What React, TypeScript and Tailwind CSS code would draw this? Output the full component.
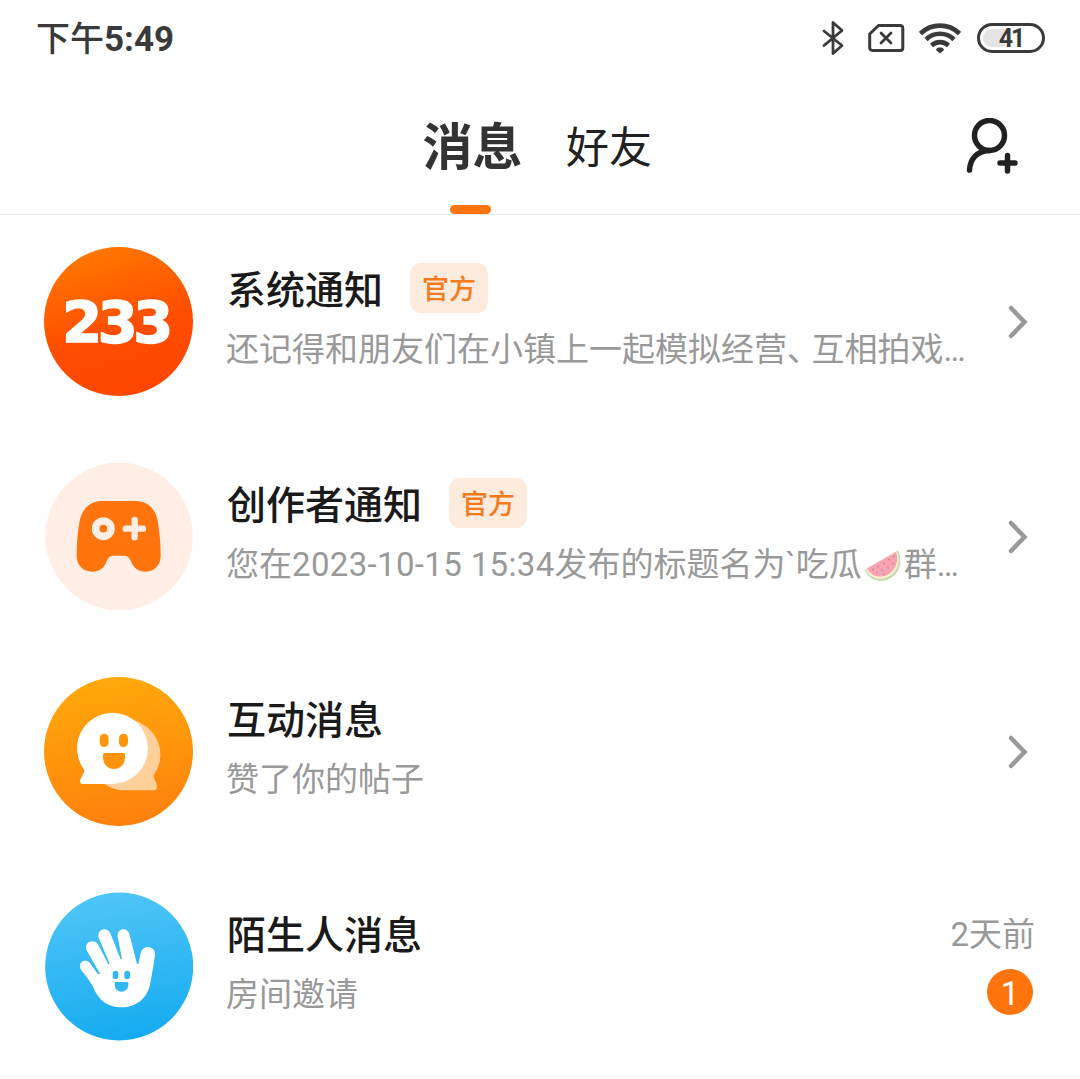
import React from 'react';

const AVATAR = 'w-[149px] h-[149px] shrink-0';

const LogoAvatar: React.FC = () => (
  <svg viewBox="42 36 447 447" className={AVATAR}>
    <defs>
      <linearGradient id="logo-bg" x1="0.25" y1="0" x2="0.55" y2="1">
        <stop offset="0" stopColor="#ff7a00" />
        <stop offset="0.6" stopColor="#ff4c00" />
        <stop offset="1" stopColor="#ff4700" />
      </linearGradient>
    </defs>
    <circle cx="265.5" cy="259.5" r="223.5" fill="url(#logo-bg)" />
    <text
      x="97 203 310"
      y="323"
      fill="#fff"
      stroke="#fff"
      strokeWidth="5"
      fontSize="172"
      className="font-['DejaVu_Sans'] font-bold"
    >
      233
    </text>
  </svg>
);

const GamepadAvatar: React.FC = () => (
  <svg viewBox="42 36 447 447" className={AVATAR}>
    <circle cx="267.5" cy="259.5" r="221.5" fill="#feeee6" />
    <path
      d="M215 153H318C355 153 377 180 383 212C389 245 392 280 392 318C392 346 372 365 347 365C325 365 311 354 304 336C299 323 293 317 280 317H252C239 317 234 323 229 336C222 354 208 365 186 365C160 365 140 346 140 318C140 280 143 245 149 212C156 180 178 153 215 153Z"
      fill="#ff740d"
    />
    <circle cx="220" cy="236" r="23" fill="none" stroke="#feeee6" strokeWidth="23" />
    <path d="M314 210V262M287 236H339" stroke="#feeee6" strokeWidth="19" strokeLinecap="round" />
  </svg>
);

const BubbleAvatar: React.FC = () => (
  <svg viewBox="42 36 447 447" className={AVATAR}>
    <defs>
      <linearGradient id="bubble-bg" x1="0.4" y1="0" x2="0.55" y2="1">
        <stop offset="0" stopColor="#ffa90b" />
        <stop offset="1" stopColor="#ff800c" />
      </linearGradient>
    </defs>
    <circle cx="265.5" cy="259.5" r="223.5" fill="url(#bubble-bg)" />
    <path
      d="M284 163A106 106 0 0 1 371 331C370 340 381 353 381 365C381 372 378 376 371 376H284A106 106 0 0 1 284 163Z"
      fill="#ffcf99"
    />
    <path
      d="M247 143A107 107 0 1 1 247 357H158C151 357 149 352 151 345C154 334 163 325 163 315A107 107 0 0 1 247 143Z"
      fill="#fff"
    />
    <rect x="209" y="206" width="27" height="40" rx="13.5" fill="#ff960c" />
    <rect x="267" y="206" width="27" height="40" rx="13.5" fill="#ff960c" />
    <path d="M224 264H280Q285 264 285 270V279A33 33 0 0 1 219 279V270Q219 264 224 264Z" fill="#ff930c" />
  </svg>
);

const HandAvatar: React.FC = () => (
  <svg viewBox="42 36 447 447" className={AVATAR}>
    <defs>
      <linearGradient id="hand-bg" x1="0.4" y1="0" x2="0.55" y2="1">
        <stop offset="0" stopColor="#50c5f7" />
        <stop offset="1" stopColor="#15abf0" />
      </linearGradient>
    </defs>
    <circle cx="267.5" cy="259.5" r="222" fill="url(#hand-bg)" />
    <path
      d="M150 259C149 244 166 237 178 247L204 283L210 281L170 211C160 190 187 174 203 191L235 253L239 251L206 173C199 149 231 138 241 160L272 238L276 237L263 170C260 145 291 140 298 162L321 252H325L333 216C342 192 377 199 375 224C371 254 366 281 361 309C353 357 316 382 274 382C233 382 207 360 193 329C185 309 170 290 155 272C152 268 150 264 150 259Z"
      fill="#fff"
    />
    <rect x="248" y="272" width="17" height="25" rx="8.5" fill="#32b7f3" />
    <rect x="283" y="272" width="17" height="25" rx="8.5" fill="#32b7f3" />
    <path d="M257 306H291Q295 306 295 310V315A20.500 20.500 0 0 1 254 315V310Q254 306 257 306Z" fill="#32b7f3" />
  </svg>
);

const Watermelon: React.FC = () => (
  <svg viewBox="0 0 38 32" className="inline-block w-[38px] h-8 mx-[2px] align-[-6px]">
    <path d="M0.500 20L34 0.500C39 11 36 23 26 28.500C16 34 5 29.500 0.500 20Z" fill="#c3dcae" />
    <path d="M1.500 19.500L33 1C37 11 34 21.500 25 26.500C16 31.500 6 28 1.500 19.500Z" fill="#fbeed2" />
    <path d="M3 18.500L32 2C35 10 32 20 24 24.500C16 29 7 26 3 18.500Z" fill="#f7a3b1" />
    <path
      d="M9 19v1M14 16v1M20 13v1M25 9v1M30 6v1M13 22v1M18 20v1M24 17v1M29 13v1M20 24v1"
      stroke="#c98897"
      strokeWidth="1.400"
      strokeLinecap="round"
    />
  </svg>
);

const Chevron: React.FC = () => (
  <svg viewBox="0 0 20 34" className="w-5 h-[34px] mt-[90px] mr-[52px] shrink-0" fill="none">
    <path d="M3 3L16.500 17L3 31" stroke="#999" strokeWidth="4.500" strokeLinecap="round" strokeLinejoin="miter" />
  </svg>
);

const StatusBar: React.FC = () => (
  <div className="flex h-[76px] items-center pl-9 pr-[35px] text-[#3a3a3a]">
    <span className="pt-[2px] text-[34px] leading-[40px] font-medium">
      下午<span className="text-[35px] font-bold">5:49</span>
    </span>
    <div className="ml-auto flex items-center">
      <svg viewBox="0 0 24 36" className="w-6 h-9" fill="none">
        <path
          d="M3 11L21 25.500L12 33.500V2.500L21 10.500L3 25.500"
          stroke="currentColor"
          strokeWidth="2.800"
          strokeLinecap="round"
          strokeLinejoin="round"
        />
      </svg>
      <svg
        viewBox="0 0 37 30"
        className="ml-[23px] w-[37px] h-[30px]"
        fill="none"
        stroke="currentColor"
        strokeLinecap="round"
        strokeLinejoin="round"
      >
        <path
          d="M10.500 2.500H32Q34.800 2.500 34.800 5.300V24.700Q34.800 27.500 32 27.500H4.500Q1.700 27.500 1.700 24.700V11Z"
          strokeWidth="3"
        />
        <path d="M13 10L23 20M23 10L13 20" strokeWidth="2.800" />
      </svg>
      <svg viewBox="0 0 42 32" className="ml-[14px] w-[42px] h-8" fill="none" stroke="currentColor" strokeWidth="4.600">
        <path d="M1.500 11.500A28 28 0 0 1 40.500 11.500" />
        <path d="M7 17.500A20 20 0 0 1 35 17.500" />
        <path d="M12.500 23.500A12.500 12.500 0 0 1 29.500 23.500" />
        <path
          d="M21 25.500C24 25.500 25.500 27 24.500 28.500L21 31.500L17.500 28.500C16.500 27 18 25.500 21 25.500Z"
          fill="currentColor"
          stroke="none"
        />
      </svg>
      <div className="ml-4 flex h-[30px] w-[68px] items-center justify-center rounded-full border-[3px] border-[#3a3a3a] p-[3px]">
        <div className="flex h-full w-full items-center justify-center rounded-full bg-[linear-gradient(90deg,#e4e4e4_22px,#fff_22px)] text-[25px] leading-none font-bold tracking-[-2px]">
          41
        </div>
      </div>
    </div>
  </div>
);

const Header: React.FC = () => (
  <div className="flex h-[139px] items-start border-b border-[#ebebeb]">
    <div className="ml-[422px] flex w-[101px] flex-col items-center">
      <span className="mt-[37px] h-[70px] text-[50px] leading-[70px] font-bold text-[#333]">消息</span>
      <span className="mt-[22px] mr-[4px] h-[9px] w-[41px] rounded-full bg-[#ff740d]" />
    </div>
    <span className="mt-[37px] ml-[43px] text-[43px] leading-[70px] text-[#212121]">好友</span>
    <svg
      viewBox="0 0 54 58"
      className="mt-[42px] ml-auto mr-[61px] w-[54px] h-[58px]"
      fill="none"
      stroke="#212121"
      strokeLinecap="round"
    >
      <circle cx="24.500" cy="17.500" r="15" strokeWidth="5.500" />
      <path d="M4.500 52C5 41 12 33 24 32.500" strokeWidth="5.500" />
      <path d="M42.500 37.500V53M35 45H50" strokeWidth="5.500" />
    </svg>
  </div>
);

interface RowProps {
  avatar: React.ReactNode;
  title: string;
  official?: boolean;
  message: React.ReactNode;
  right: React.ReactNode;
}

const MessageRow: React.FC<RowProps> = ({ avatar, title, official, message, right }) => (
  <div className="flex h-[215px] items-start pl-11">
    <div className="mt-8">{avatar}</div>
    <div className="ml-[34px] mt-12 min-w-0 flex-1">
      <div className="flex h-[50px] items-center">
        <span className="pt-[5px] text-[39px] leading-[50px] font-medium whitespace-nowrap text-[#1a1a1a]">
          {title}
        </span>
        {official && (
          <span className="ml-[27px] flex h-[50px] w-[78px] items-center justify-center rounded-[11px] bg-[#fdebde] pt-[5px] text-[27px] font-medium text-[#f47a20]">
            官方
          </span>
        )}
      </div>
      <p className="mt-[12px] -ml-px text-[33px] leading-[50px] whitespace-nowrap text-[#999]">{message}</p>
    </div>
    {right}
  </div>
);

export default function App() {
  return (
    <div className="h-[1079px] w-[1080px] overflow-hidden bg-white font-['Roboto','Noto_Sans_CJK_SC',sans-serif]">
      <StatusBar />
      <Header />
      <MessageRow
        avatar={<LogoAvatar />}
        title="系统通知"
        official
        message={
          <>
            还记得和朋友们在小镇上一起模拟经营
            <span className="mr-[8px] [font-feature-settings:'halt']">、</span>
            互相拍戏…
          </>
        }
        right={<Chevron />}
      />
      <MessageRow
        avatar={<GamepadAvatar />}
        title="创作者通知"
        official
        message={
          <>
            您在<span className="tracking-[0.350px]">2023-10-15 15:34</span>发布的标题名为`吃瓜
            <Watermelon />
            群…
          </>
        }
        right={<Chevron />}
      />
      <MessageRow avatar={<BubbleAvatar />} title="互动消息" message="赞了你的帖子" right={<Chevron />} />
      <MessageRow
        avatar={<HandAvatar />}
        title="陌生人消息"
        message="房间邀请"
        right={
          <div className="mt-12 mr-[45px] flex flex-col items-end">
            <span className="pt-[2px] text-[33px] leading-[50px] text-[#999]">2天前</span>
            <span className="mt-[9px] mr-[2px] flex h-[46px] w-[46px] items-center justify-center rounded-full bg-[#ff740d] pt-[2px] text-[33px] leading-none text-white">
              1
            </span>
          </div>
        }
      />
      <div className="h-1 bg-[#f8f8f8]" />
    </div>
  );
}
